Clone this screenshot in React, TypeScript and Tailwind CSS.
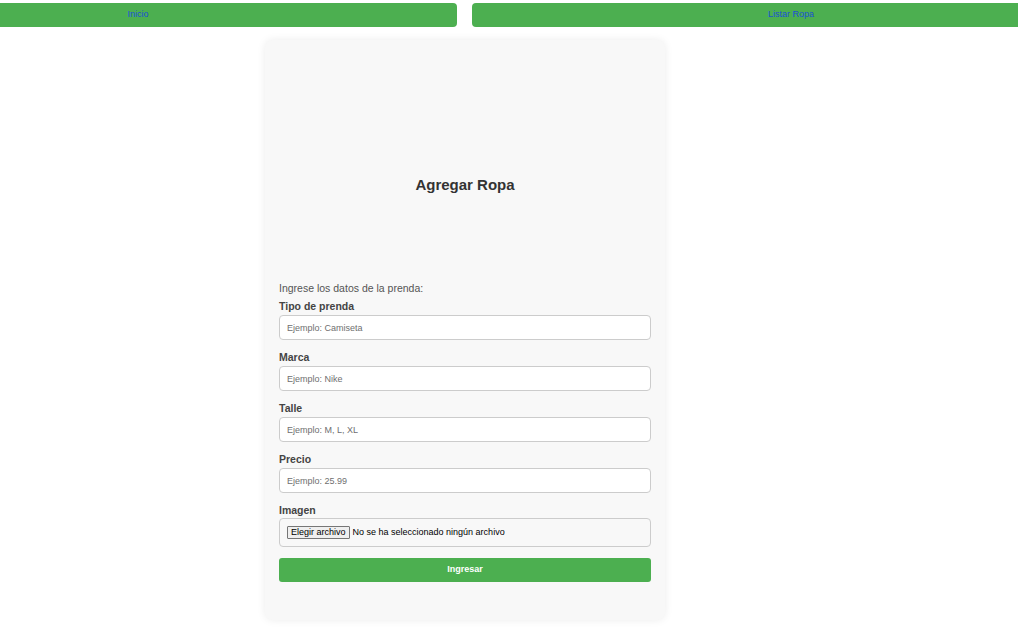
import { useState } from "react";

// Formulario para agregar una prenda
const campos = [
  { id: "tipo", label: "Tipo de prenda", placeholder: "Ejemplo: Camiseta" },
  { id: "marca", label: "Marca", placeholder: "Ejemplo: Nike" },
  { id: "talle", label: "Talle", placeholder: "Ejemplo: M, L, XL" },
  { id: "precio", label: "Precio", placeholder: "Ejemplo: 25.99" },
];

const App = () => {
  const [valores, setValores] = useState<Record<string, string>>({});

  return (
    <div className="min-h-screen w-full overflow-hidden bg-white font-['Liberation_Sans',Arial,sans-serif]">
      {/* navegación */}
      <nav className="flex w-[1291px] -ml-[181px] gap-[15px] pt-[3px]">
        <a href="#" className="flex h-[24px] flex-1 items-center justify-center rounded-[4px] bg-[#4caf50] text-[9px] text-[#1a4fd6]">
          Inicio
        </a>
        <a href="#" className="flex h-[24px] flex-1 items-center justify-center rounded-[4px] bg-[#4caf50] text-[9px] text-[#1a4fd6]">
          Listar Ropa
        </a>
      </nav>

      <div className="ml-[265px] mt-[13px] w-[400px] rounded-[8px] bg-[#f8f8f8] px-[14px] pb-[38px] shadow-[0_0_8px_rgba(0,0,0,0.08)]">
        <h2 className="pt-[136px] text-center text-[15px] font-bold leading-[18px] text-[#333]">
          Agregar Ropa
        </h2>
        <p className="mt-[87px] text-[10.5px] leading-[14px] text-[#555]">Ingrese los datos de la prenda:</p>

        <form className="mt-[4px]" onSubmit={(e) => e.preventDefault()}>
          {campos.map((c) => (
            <div key={c.id} className="mb-[10px]">
              <label htmlFor={c.id} className="block text-[10.5px] font-bold leading-[14px] text-[#444]">
                {c.label}
              </label>
              <input
                id={c.id}
                value={valores[c.id] ?? ""}
                onChange={(e) => setValores({ ...valores, [c.id]: e.target.value })}
                placeholder={c.placeholder}
                className="mt-[2px] block h-[25px] w-full rounded-[4px] border border-[#ccc] bg-white px-[7px] text-[9px] text-[#333] placeholder:text-[#6f6f6f] outline-none"
              />
            </div>
          ))}

          <div>
            <span className="block text-[10.5px] font-bold leading-[14px] text-[#444]">Imagen</span>
            <label className="mt-[1px] flex h-[29px] w-full items-center rounded-[4px] border border-[#ccc] bg-[#f8f8f8] px-[7px] text-[9px] text-black">
              <span className="rounded-[1px] border border-[#767676] bg-[#efefef] px-[3px] leading-[11px]">Elegir archivo</span>
              <span className="ml-[3px]">No se ha seleccionado ningún archivo</span>
              <input type="file" className="hidden" />
            </label>
          </div>

          <button
            type="submit"
            className="mt-[11px] block h-[24px] w-full rounded-[3px] bg-[#4caf50] text-[9px] font-bold text-white"
          >
            Ingresar
          </button>
        </form>
      </div>
    </div>
  );
};

export default App;
